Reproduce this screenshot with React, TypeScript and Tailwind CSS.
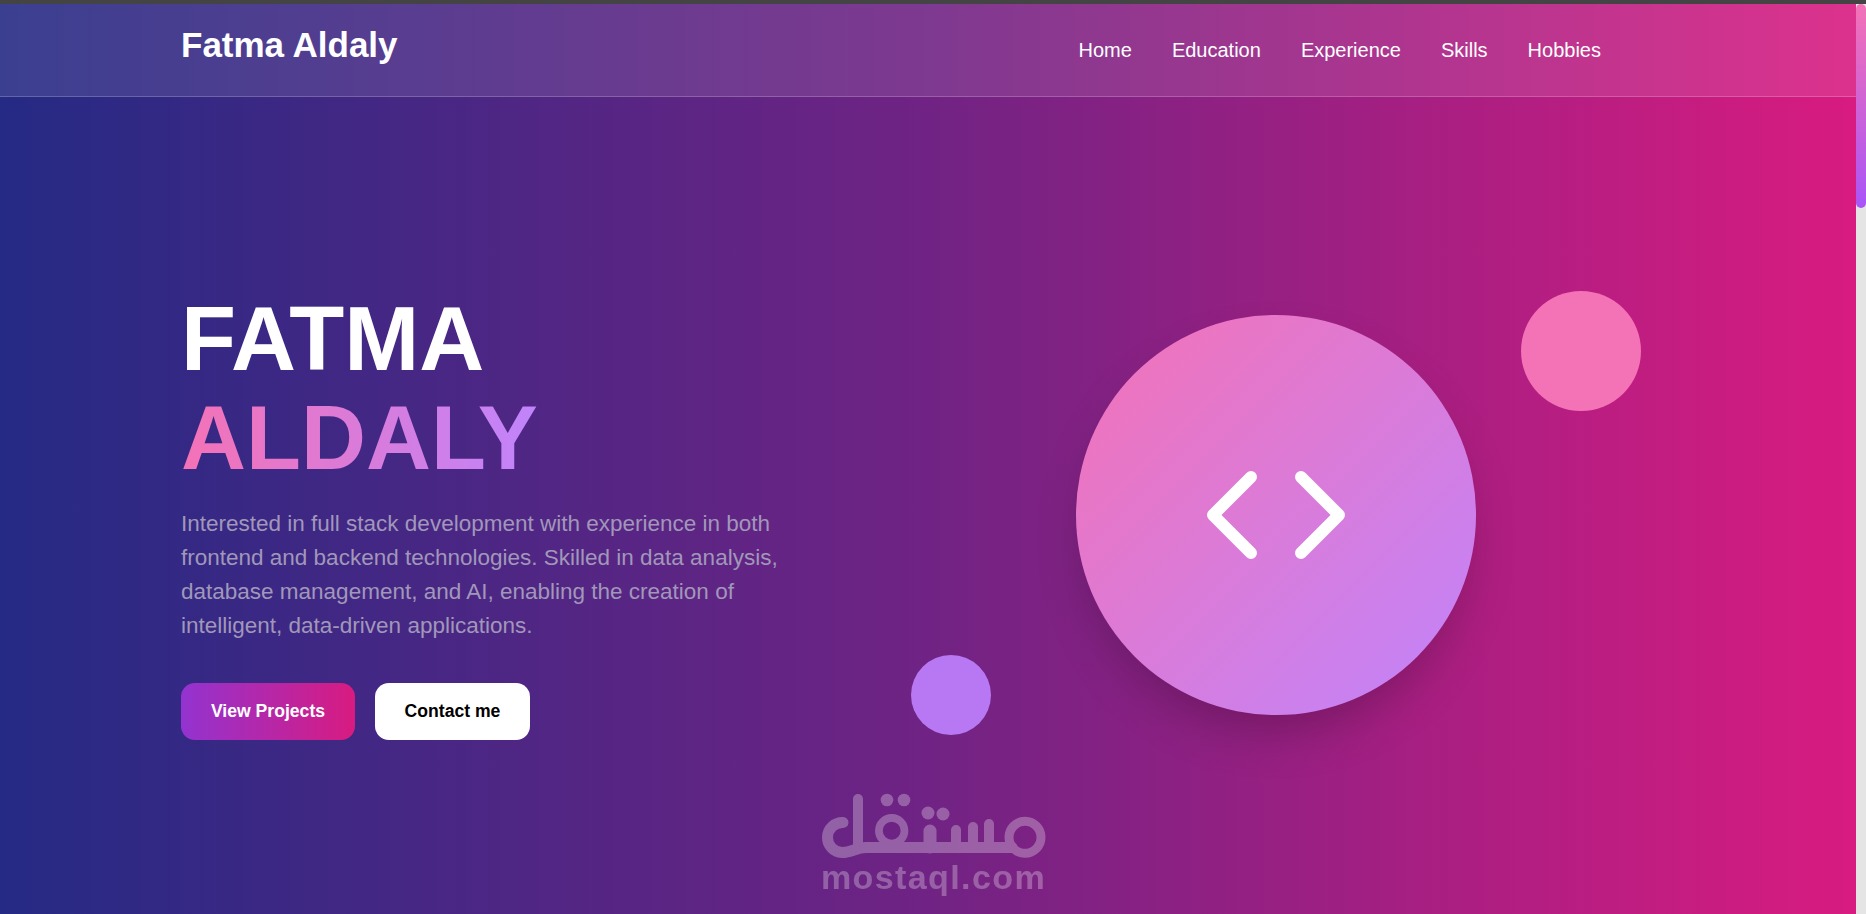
const navLinks = ["Home", "Education", "Experience", "Skills", "Hobbies"];

function CodeIcon() {
  return (
    <svg width="140" height="90" viewBox="0 0 140 90" fill="none" stroke="white" strokeWidth="12" strokeLinecap="round" strokeLinejoin="round">
      <path d="M45 7 L7 45 L45 83" />
      <path d="M95 7 L133 45 L95 83" />
    </svg>
  );
}

function Watermark() {
  return (
    <div className="absolute left-[810px] top-[781px] flex w-[250px] flex-col items-center text-white opacity-[0.28]">
      <svg width="250" height="76" viewBox="0 0 250 76" fill="none" stroke="currentColor" strokeWidth="10" strokeLinecap="round">
        <path d="M48 14 V62" />
        <path d="M33 37.5 A15 15 0 0 0 32 67.5 C42 67.5 46 62.5 56 62.5 H202" strokeWidth="11" />
        <circle cx="81.7" cy="45.7" r="12.8" strokeWidth="7.7" />
        <circle cx="215" cy="52.3" r="16" strokeWidth="9" />
        <path d="M120 62 V46" strokeWidth="13" />
        <path d="M146 62 V45 M163 62 V42 M179 62 V39" />
        <g fill="currentColor" stroke="none">
          <circle cx="77" cy="15" r="6.3" />
          <circle cx="94" cy="15" r="6.3" />
          <circle cx="118" cy="28" r="6.5" />
          <circle cx="133" cy="29" r="6.5" />
        </g>
      </svg>
      <span className="mt-[-2px] ml-[-3px] text-[34px] leading-[36px] font-bold tracking-[1.4px] whitespace-nowrap">mostaql.com</span>
    </div>
  );
}

export default function App() {
  return (
    <div className="relative h-[914px] w-full overflow-hidden bg-[#444444] pt-1 font-['Liberation_Sans',Arial,sans-serif]">
      <div className="flex h-[910px]">
        <main className="relative flex-1 overflow-hidden bg-[linear-gradient(to_right,#252a84,#702384,#d81b80)]">
          <header className="flex h-[93px] justify-between border-b border-white/20 bg-white/10 pl-[181px] pr-[255px]">
            <a className="mt-[17px] text-[35px] leading-[48px] font-bold text-white">Fatma Aldaly</a>
            <nav className="mt-[26px] flex h-[40px] items-center gap-10">
              {navLinks.map((link) => (
                <a key={link} className="text-xl text-white">
                  {link}
                </a>
              ))}
            </nav>
          </header>

          <section className="pl-[181px] pt-[193px]">
            <h1 className="text-[90px] leading-[99px] font-bold text-white">
              FATMA
              <br />
              <span className="bg-[linear-gradient(to_right,#f472b6,#c084fc)] bg-clip-text text-transparent">ALDALY</span>
            </h1>
            <p className="mt-[19px] w-[620px] text-[22.5px] leading-[34px] text-[#a197ba]">
              Interested in full stack development with experience in both frontend and backend technologies. Skilled in data analysis, database management, and AI, enabling the creation of intelligent, data-driven applications.
            </p>
            <div className="mt-[40px] flex gap-5">
              <button className="h-[57px] w-[174px] rounded-[14px] bg-[linear-gradient(to_right,#9333d0,#d81b80)] text-[17.6px] font-bold text-white">View Projects</button>
              <button className="h-[57px] w-[155px] rounded-[14px] bg-white text-[17.6px] font-bold text-black">Contact me</button>
            </div>
          </section>

          <div className="absolute left-[1076px] top-[311px] flex h-[400px] w-[400px] items-center justify-center rounded-full bg-[linear-gradient(135deg,#f472b6,#c084fc)] shadow-2xl">
            <CodeIcon />
          </div>
          <div className="absolute left-[1521px] top-[287px] h-[120px] w-[120px] rounded-full bg-[#f472b6]" />
          <div className="absolute left-[911px] top-[651px] h-[80px] w-[80px] rounded-full bg-[#b878f3]" />
          <Watermark />
        </main>

        <div className="h-full w-[10px] bg-[#e5e5e5]">
          <div className="h-[204px] rounded-full bg-[linear-gradient(to_bottom,#f472b6,#a855f7)]" />
        </div>
      </div>
    </div>
  );
}
